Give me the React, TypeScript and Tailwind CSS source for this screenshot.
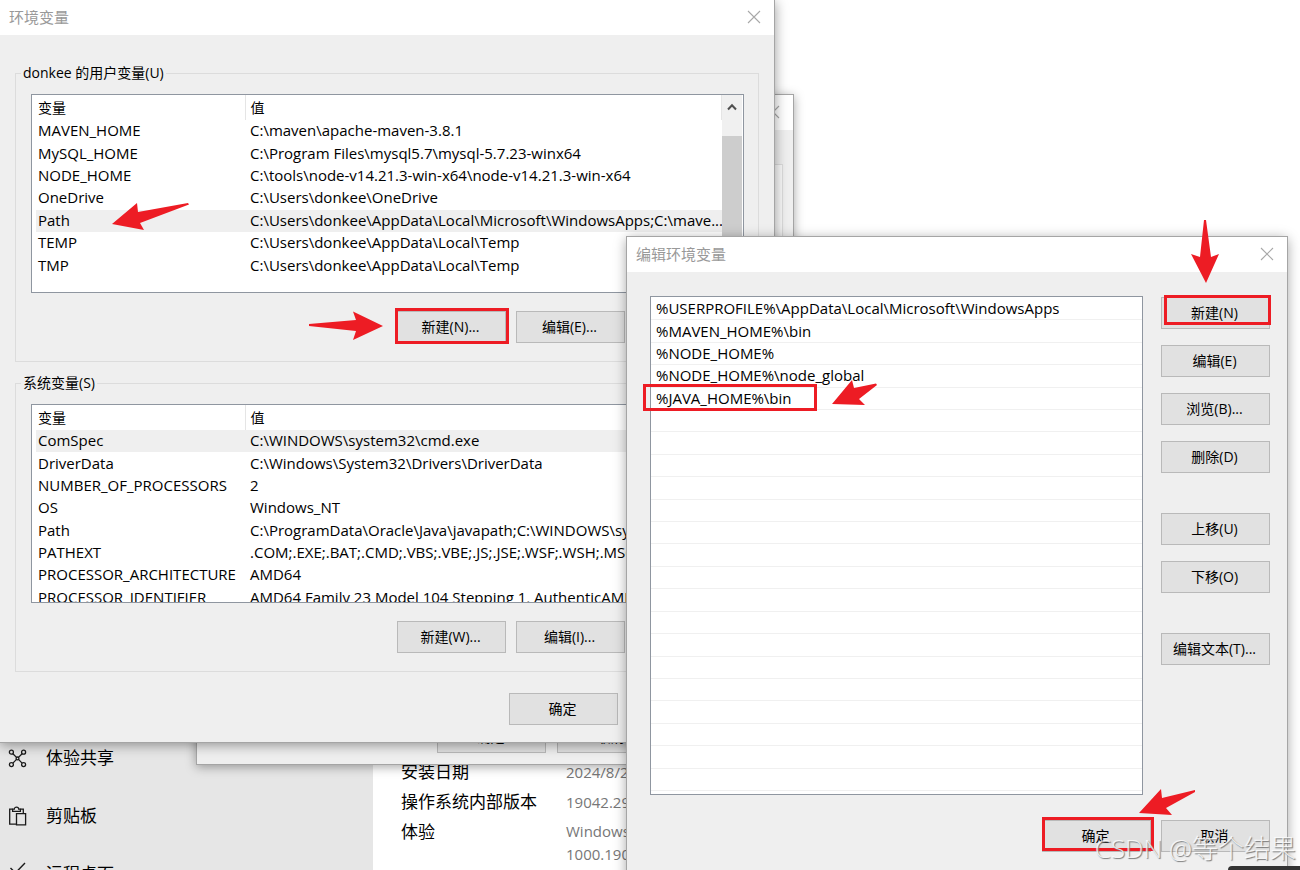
import type { ReactNode } from "react";

type Variable = { name: string; value: string };

const userVariables: Variable[] = [
  { name: "MAVEN_HOME", value: "C:\\maven\\apache-maven-3.8.1" },
  { name: "MySQL_HOME", value: "C:\\Program Files\\mysql5.7\\mysql-5.7.23-winx64" },
  { name: "NODE_HOME", value: "C:\\tools\\node-v14.21.3-win-x64\\node-v14.21.3-win-x64" },
  { name: "OneDrive", value: "C:\\Users\\donkee\\OneDrive" },
  { name: "Path", value: "C:\\Users\\donkee\\AppData\\Local\\Microsoft\\WindowsApps;C:\\mave..." },
  { name: "TEMP", value: "C:\\Users\\donkee\\AppData\\Local\\Temp" },
  { name: "TMP", value: "C:\\Users\\donkee\\AppData\\Local\\Temp" },
];

const systemVariables: Variable[] = [
  { name: "ComSpec", value: "C:\\WINDOWS\\system32\\cmd.exe" },
  { name: "DriverData", value: "C:\\Windows\\System32\\Drivers\\DriverData" },
  { name: "NUMBER_OF_PROCESSORS", value: "2" },
  { name: "OS", value: "Windows_NT" },
  { name: "Path", value: "C:\\ProgramData\\Oracle\\Java\\javapath;C:\\WINDOWS\\sy..." },
  { name: "PATHEXT", value: ".COM;.EXE;.BAT;.CMD;.VBS;.VBE;.JS;.JSE;.WSF;.WSH;.MSC" },
  { name: "PROCESSOR_ARCHITECTURE", value: "AMD64" },
  { name: "PROCESSOR_IDENTIFIER", value: "AMD64 Family 23 Model 104 Stepping 1, AuthenticAMD" },
];

const pathEntries = [
  "%USERPROFILE%\\AppData\\Local\\Microsoft\\WindowsApps",
  "%MAVEN_HOME%\\bin",
  "%NODE_HOME%",
  "%NODE_HOME%\\node_global",
  "%JAVA_HOME%\\bin",
  ...Array<string>(17).fill(""),
];

function DialogButton({ children }: { children: ReactNode }) {
  return (
    <button
      type="button"
      className="h-8 w-[109px] shrink-0 border border-[#b9b9b9] bg-[#e1e1e1] pr-0.5 text-center text-sm whitespace-nowrap text-black"
    >
      {children}
    </button>
  );
}

function TitleBar({ title }: { title: string }) {
  return (
    <header className="flex h-[35px] shrink-0 items-center justify-between bg-white pr-3 pb-0.5 pl-[9px]">
      <h2 className="text-[15px] leading-5 text-[#999999]">{title}</h2>
      <button type="button" aria-label="关闭" className="flex size-4 items-center justify-center text-[#a8a8a8]">
        <svg viewBox="0 0 14 14" className="size-[14px]" fill="none" stroke="currentColor" strokeWidth="1.1">
          <path d="M1 1 13 13M13 1 1 13" />
        </svg>
      </button>
    </header>
  );
}

function VariableTable({
  rows,
  selected,
  label,
  height,
}: {
  rows: Variable[];
  selected: number;
  label: string;
  height: string;
}) {
  return (
    <div className="flex h-[199px] overflow-hidden border border-[#8f96a0] bg-white">
      <div className="min-w-0 flex-1 overflow-hidden pl-1">
        <table
          aria-label={label}
          className={`w-full table-fixed border-collapse text-left text-[15px] leading-5 ${height}`}
        >
          <thead>
            <tr className="h-[25px]">
              <th className="w-[209px] border-r border-[#e5e5e5] p-0 pl-0.5 text-sm font-normal">变量</th>
              <th className="border-r border-[#e5e5e5] p-0 pl-[5px] text-sm font-normal">值</th>
            </tr>
          </thead>
          <tbody>
            {rows.map((row, i) => (
              <tr key={row.name} className={i === selected ? "bg-[#efefef]" : ""}>
                <td className="p-0 pb-0.5 pl-0.5 whitespace-nowrap">{row.name}</td>
                <td className="overflow-hidden p-0 pb-0.5 pl-[5px] whitespace-nowrap">{row.value}</td>
              </tr>
            ))}
          </tbody>
        </table>
      </div>
      <div className="mr-px flex w-5 shrink-0 flex-col bg-[#f0f0f0]">
        <div className="flex h-[41px] shrink-0 justify-center pt-2">
          <svg viewBox="0 0 10 8" className="h-2 w-[10px]" fill="none" stroke="#505050" strokeWidth="2">
            <path d="M1 6.5 5 2.2 9 6.5" />
          </svg>
        </div>
        <div className="h-[120px] bg-[#cdcdcd]" />
      </div>
    </div>
  );
}

function VariableGroup({ legend, children }: { legend: string; children: ReactNode }) {
  return (
    <fieldset className="h-[299px] min-w-0 border border-[#dcdcdc] pr-[14px] pl-[15px]">
      <legend className="-ml-[10px] px-0.5 text-sm leading-5">{legend}</legend>
      {children}
    </fieldset>
  );
}

function SettingsPage() {
  return (
    <div className="flex min-h-screen">
      <nav className="w-[373px] shrink-0 bg-[#e6e6e6] pt-[729px] text-[17px]">
        <a href="#share" className="flex h-[58px] items-center gap-[19px] pl-2">
          <svg viewBox="0 0 19 19" className="size-[19px]" fill="none" stroke="#1a1a1a" strokeWidth="1.3">
            <circle cx="3.4" cy="3.2" r="2" />
            <circle cx="15.6" cy="3.2" r="2" />
            <circle cx="3.4" cy="15.6" r="2" />
            <circle cx="15.6" cy="15.6" r="2" />
            <circle cx="9.5" cy="9.4" r="1.4" />
            <path d="M4.9 4.7 8.5 8.4M14.1 4.7 10.5 8.4M4.9 14.1 8.5 10.4M14.1 14.1 10.5 10.4" />
          </svg>
          体验共享
        </a>
        <a href="#clipboard" className="flex h-[58px] items-center gap-[19px] pl-2">
          <svg viewBox="0 0 19 20" className="h-5 w-[19px]" fill="none" stroke="#1a1a1a" strokeWidth="1.3">
            <path d="M8 18.2H1.7V3.2H4.6M12.4 3.2H15.3V7.5" />
            <path d="M4.6 5.3V3.2H6.3C6.3 0.4 10.7 0.4 10.7 3.2H12.4V5.3Z" />
            <path d="M8.5 7.7H17.6V18.8H8.5Z" />
          </svg>
          剪贴板
        </a>
        <a href="#remote" className="flex h-[58px] items-center gap-[19px] pl-2">
          <svg viewBox="0 0 19 24" className="h-6 w-[19px]" fill="none" stroke="#1a1a1a" strokeWidth="1.4">
            <path d="M17 1 8.8 9.5 16 18M2.5 6 7.5 11 2.5 16.5" />
          </svg>
          远程桌面
        </a>
      </nav>
      <dl className="grid grid-cols-[165px_200px] content-start gap-y-[6px] pt-[760px] pl-7 text-[17px] leading-6">
        <dt>安装日期</dt>
        <dd className="text-[15px] leading-6 text-[#777777]">2024/8/22</dd>
        <dt>操作系统内部版本</dt>
        <dd className="text-[15px] leading-6 text-[#777777]">19042.2965</dd>
        <dt>体验</dt>
        <dd className="text-[15px] leading-[23px] text-[#777777]">
          Windows Feature
          <br />
          1000.19053
        </dd>
      </dl>
    </div>
  );
}

function SystemPropertiesDialog() {
  return (
    <section className="absolute top-[94px] left-[196px] flex h-[671px] w-[598px] flex-col border border-[#a5a5a5] bg-[#efefef] shadow-[0_2px_10px_rgba(0,0,0,0.35)]">
      <TitleBar title="系统属性" />
      <div className="mx-[10px] mt-[34px] flex-1 border border-[#dcdcdc] bg-[#f9f9f9]" />
      <div className="flex gap-[11px] pt-[11px] pb-[11px] pl-60">
        <DialogButton>确定</DialogButton>
        <DialogButton>取消</DialogButton>
      </div>
    </section>
  );
}

function EnvironmentDialog() {
  return (
    <section className="absolute top-0 left-0 flex h-[743px] w-[775px] flex-col border-r border-b border-[#a5a5a5] bg-[#efefef] shadow-[0_2px_12px_rgba(0,0,0,0.4)]">
      <TitleBar title="环境变量" />
      <div className="flex flex-col gap-[11px] px-[15px] pt-7">
        <VariableGroup legend="donkee 的用户变量(U)">
          <div className="pt-[11px]">
            <VariableTable rows={userVariables} selected={4} label="用户变量" height="h-[182px]" />
          </div>
          <div className="flex justify-end gap-[10px] pt-[18px]">
            <DialogButton>新建(N)...</DialogButton>
            <DialogButton>编辑(E)...</DialogButton>
            <DialogButton>删除(D)</DialogButton>
          </div>
        </VariableGroup>
        <VariableGroup legend="系统变量(S)">
          <div className="pt-[11px]">
            <VariableTable rows={systemVariables} selected={0} label="系统变量" height="h-[204px]" />
          </div>
          <div className="flex justify-end gap-[10px] pt-[18px]">
            <DialogButton>新建(W)...</DialogButton>
            <DialogButton>编辑(I)...</DialogButton>
            <DialogButton>删除(L)</DialogButton>
          </div>
        </VariableGroup>
      </div>
      <div className="flex gap-[10px] pt-[21px] pl-[509px]">
        <DialogButton>确定</DialogButton>
        <DialogButton>取消</DialogButton>
      </div>
    </section>
  );
}

function EditDialog() {
  return (
    <section className="absolute top-[237px] left-[627px] flex h-[660px] w-[660px] flex-col bg-[#efefef] shadow-[0_2px_12px_rgba(0,0,0,0.4)] outline outline-[#a5a5a5]">
      <TitleBar title="编辑环境变量" />
      <div className="flex gap-[18px] pt-6 pr-[17px] pl-[23px]">
        <div className="h-[499px] min-w-0 flex-1 border border-[#8f96a0] bg-white">
          <ul aria-label="路径" className="grid h-[494px] auto-rows-fr pt-px text-[15px]">
            {pathEntries.map((entry, i) => (
              <li key={i} className="flex items-center border-b border-[#f0f0f0] pb-px pl-[5px] leading-5">
                {entry}
              </li>
            ))}
          </ul>
        </div>
        <div className="flex flex-col gap-4 pt-px">
          <DialogButton>新建(N)</DialogButton>
          <DialogButton>编辑(E)</DialogButton>
          <DialogButton>浏览(B)...</DialogButton>
          <DialogButton>删除(D)</DialogButton>
          <div className="flex flex-col gap-4 pt-6">
            <DialogButton>上移(U)</DialogButton>
            <DialogButton>下移(O)</DialogButton>
          </div>
          <div className="pt-6">
            <DialogButton>编辑文本(T)...</DialogButton>
          </div>
        </div>
      </div>
      <div className="flex justify-end gap-[10px] pt-[25px] pr-[17px]">
        <DialogButton>确定</DialogButton>
        <DialogButton>取消</DialogButton>
      </div>
    </section>
  );
}

function Annotations() {
  return (
    <svg
      viewBox="0 0 1300 870"
      className="pointer-events-none absolute top-0 left-0 h-[870px] w-[1300px]"
      aria-hidden="true"
    >
      <g fill="none" stroke="#ed1c24" strokeWidth="3">
        <rect x="396.5" y="309.5" width="111" height="33" />
        <rect x="1165.5" y="296.5" width="104" height="27" />
        <rect x="644.5" y="385.5" width="171" height="24" />
        <rect x="1043.5" y="818.5" width="109" height="31" />
      </g>
      <g fill="#ed1c24">
        <path d="M112 224 137 203 138 212 188 203 189 204.5 140 223 144 230Z" />
        <path d="M309 324 356 320 353 311.5 383 326 353 340 356 331 309 326Z" />
        <path d="M1204 220H1206L1211 257 1219 254 1206 283 1191 254 1200 257Z" />
        <path d="M832 404 852 380 854 388 876 383.5 877 385 859 399 865 405Z" />
        <path d="M1139 813 1161 789 1162 798 1195 790 1195 792 1166 808 1172 815Z" />
      </g>
    </svg>
  );
}

export default function App() {
  return (
    <main className="relative h-screen overflow-hidden bg-white font-['Open_Sans','Noto_Sans_CJK_SC',sans-serif] text-black">
      <SettingsPage />
      <SystemPropertiesDialog />
      <EnvironmentDialog />
      <EditDialog />
      <div className="absolute right-0 bottom-0 h-1 w-[72px] rounded-tl-md bg-[#333333]" />
      <Annotations />
      <p className="absolute right-1 bottom-1 text-[26px] leading-9 font-light whitespace-nowrap text-white/80 [text-shadow:1px_1px_1px_#777777]">
        CSDN @等个结果
      </p>
    </main>
  );
}
